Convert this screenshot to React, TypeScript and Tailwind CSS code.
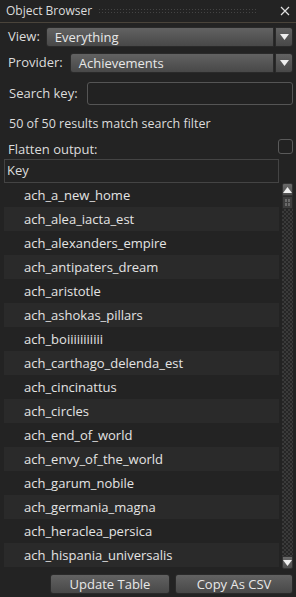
import React from "react";

const items = [
  "ach_a_new_home",
  "ach_alea_iacta_est",
  "ach_alexanders_empire",
  "ach_antipaters_dream",
  "ach_aristotle",
  "ach_ashokas_pillars",
  "ach_boiiiiiiiiiii",
  "ach_carthago_delenda_est",
  "ach_cincinattus",
  "ach_circles",
  "ach_end_of_world",
  "ach_envy_of_the_world",
  "ach_garum_nobile",
  "ach_germania_magna",
  "ach_heraclea_persica",
  "ach_hispania_universalis",
];

function Arrow({ up = false }: { up?: boolean }) {
  return (
    <svg width="9" height="6" viewBox="0 0 9 6">
      {up ? <polygon points="0,6 9,6 4.5,0" fill="#eee" /> : <polygon points="0,0 9,0 4.5,6" fill="#eee" />}
    </svg>
  );
}

function Combo({ text }: { text: string }) {
  return (
    <div className="flex flex-1 h-[20px] gap-[1px]">
      <div className="flex-1 flex items-center rounded-l-[3px] border border-[#2a2a2a] bg-linear-to-b from-[#626262] to-[#484848] pl-[8px] text-[13px] text-[#e8e8e8] leading-none">
        {text}
      </div>
      <div className="w-[18px] flex items-center justify-center rounded-r-[3px] border border-[#2a2a2a] bg-linear-to-b from-[#626262] to-[#484848]">
        <Arrow />
      </div>
    </div>
  );
}

export default function App() {
  return (
    <div
      className="w-[296px] h-[597px] bg-[#232323] flex flex-col text-[#dcdcdc] overflow-hidden"
      style={{ fontFamily: '"Open Sans", "Noto Sans", sans-serif' }}
    >
      <div className="h-[23px] flex items-center pl-[6px] pr-[4px] border-b border-[#4a443b] shrink-0">
        <span className="text-[12px] leading-none">Object Browser</span>
        <div className="ml-[6px] mr-[22px] flex-1 h-[6px] bg-[radial-gradient(#444444_0.8px,transparent_0.9px)] bg-[length:3px_3px]" />
        <svg width="10" height="10" viewBox="0 0 10 10" className="mr-[2px]">
          <path d="M1 1 L9 9 M9 1 L1 9" stroke="#e0e0e0" strokeWidth="1.2" />
        </svg>
      </div>

      <div className="flex items-center pl-[8px] pr-[3px] mt-[4px] h-[20px] gap-[6px]">
        <span className="text-[13px]">View:</span>
        <Combo text="Everything" />
      </div>

      <div className="flex items-center pl-[8px] pr-[3px] mt-[6px] h-[20px] gap-[7px]">
        <span className="text-[13px]">Provider:</span>
        <Combo text="Achievements" />
      </div>

      <div className="flex items-center pl-[9px] pr-[3px] mt-[9px] h-[23px] gap-[9px]">
        <span className="text-[13px]">Search key:</span>
        <div className="flex-1 h-[23px] rounded-[3px] border border-[#555] bg-[#222]" />
      </div>

      <div className="pl-[9px] mt-[9px] text-[12.5px] h-[20px] flex items-center">50 of 50 results match search filter</div>

      <div className="flex items-center pl-[8px] pr-[3px] mt-[5px] h-[16px]">
        <span className="text-[13px] flex-1 mt-[6px]">Flatten output:</span>
        <div className="w-[15px] h-[15px] rounded-[3px] border border-[#5a5a5a] bg-[#222] -mt-[2px]" />
      </div>

      <div className="flex mt-[4px] pl-[4px] pr-[3px] flex-1 min-h-0">
        <div className="flex-1 flex flex-col min-w-0">
          <div className="h-[24px] border border-[#444] flex items-center pl-[2px] text-[13px] shrink-0">Key</div>
          <div className="flex flex-col">
            {items.map((t, i) => (
              <div
                key={t}
                className={`h-[24px] flex items-center pl-[20px] pt-[2px] text-[13px] text-[#e4e4e4] ${i % 2 === 1 ? "bg-[#2a2a2a]" : ""}`}
              >
                {t}
              </div>
            ))}
          </div>
        </div>
        <div className="w-[11px] ml-[3px] mt-[24px] mb-[4px] flex flex-col">
          <div className="h-[13px] rounded-t-[2px] bg-linear-to-b from-[#6a6a6a] to-[#4e4e4e] flex items-center justify-center border border-[#333]">
            <Arrow up />
          </div>
          <div className="h-[13px] bg-[#3e3e3e] border border-[#2a2a2a] grid grid-cols-2 gap-[1px] p-[2px]">
            <div className="bg-[#6a6a6a]" />
            <div className="bg-[#6a6a6a]" />
            <div className="bg-[#6a6a6a]" />
            <div className="bg-[#6a6a6a]" />
          </div>
          <div className="flex-1 bg-[repeating-conic-gradient(#3a3a3a_0%_25%,#262626_0%_50%)] bg-[length:4px_4px]" />
          <div className="h-[13px] rounded-b-[2px] bg-linear-to-b from-[#6a6a6a] to-[#4e4e4e] flex items-center justify-center border border-[#333]">
            <Arrow />
          </div>
        </div>
      </div>

      <div className="flex justify-end gap-[5px] pr-[3px] pb-[3px] h-[23px] shrink-0 mt-[1px]">
        <button className="w-[120px] h-[20px] rounded-[3px] border border-[#2a2a2a] bg-linear-to-b from-[#626262] to-[#484848] text-[13px] text-[#e8e8e8] leading-none">
          Update Table
        </button>
        <button className="w-[118px] h-[20px] rounded-[3px] border border-[#2a2a2a] bg-linear-to-b from-[#626262] to-[#484848] text-[13px] text-[#e8e8e8] leading-none">
          Copy As CSV
        </button>
      </div>
    </div>
  );
}
